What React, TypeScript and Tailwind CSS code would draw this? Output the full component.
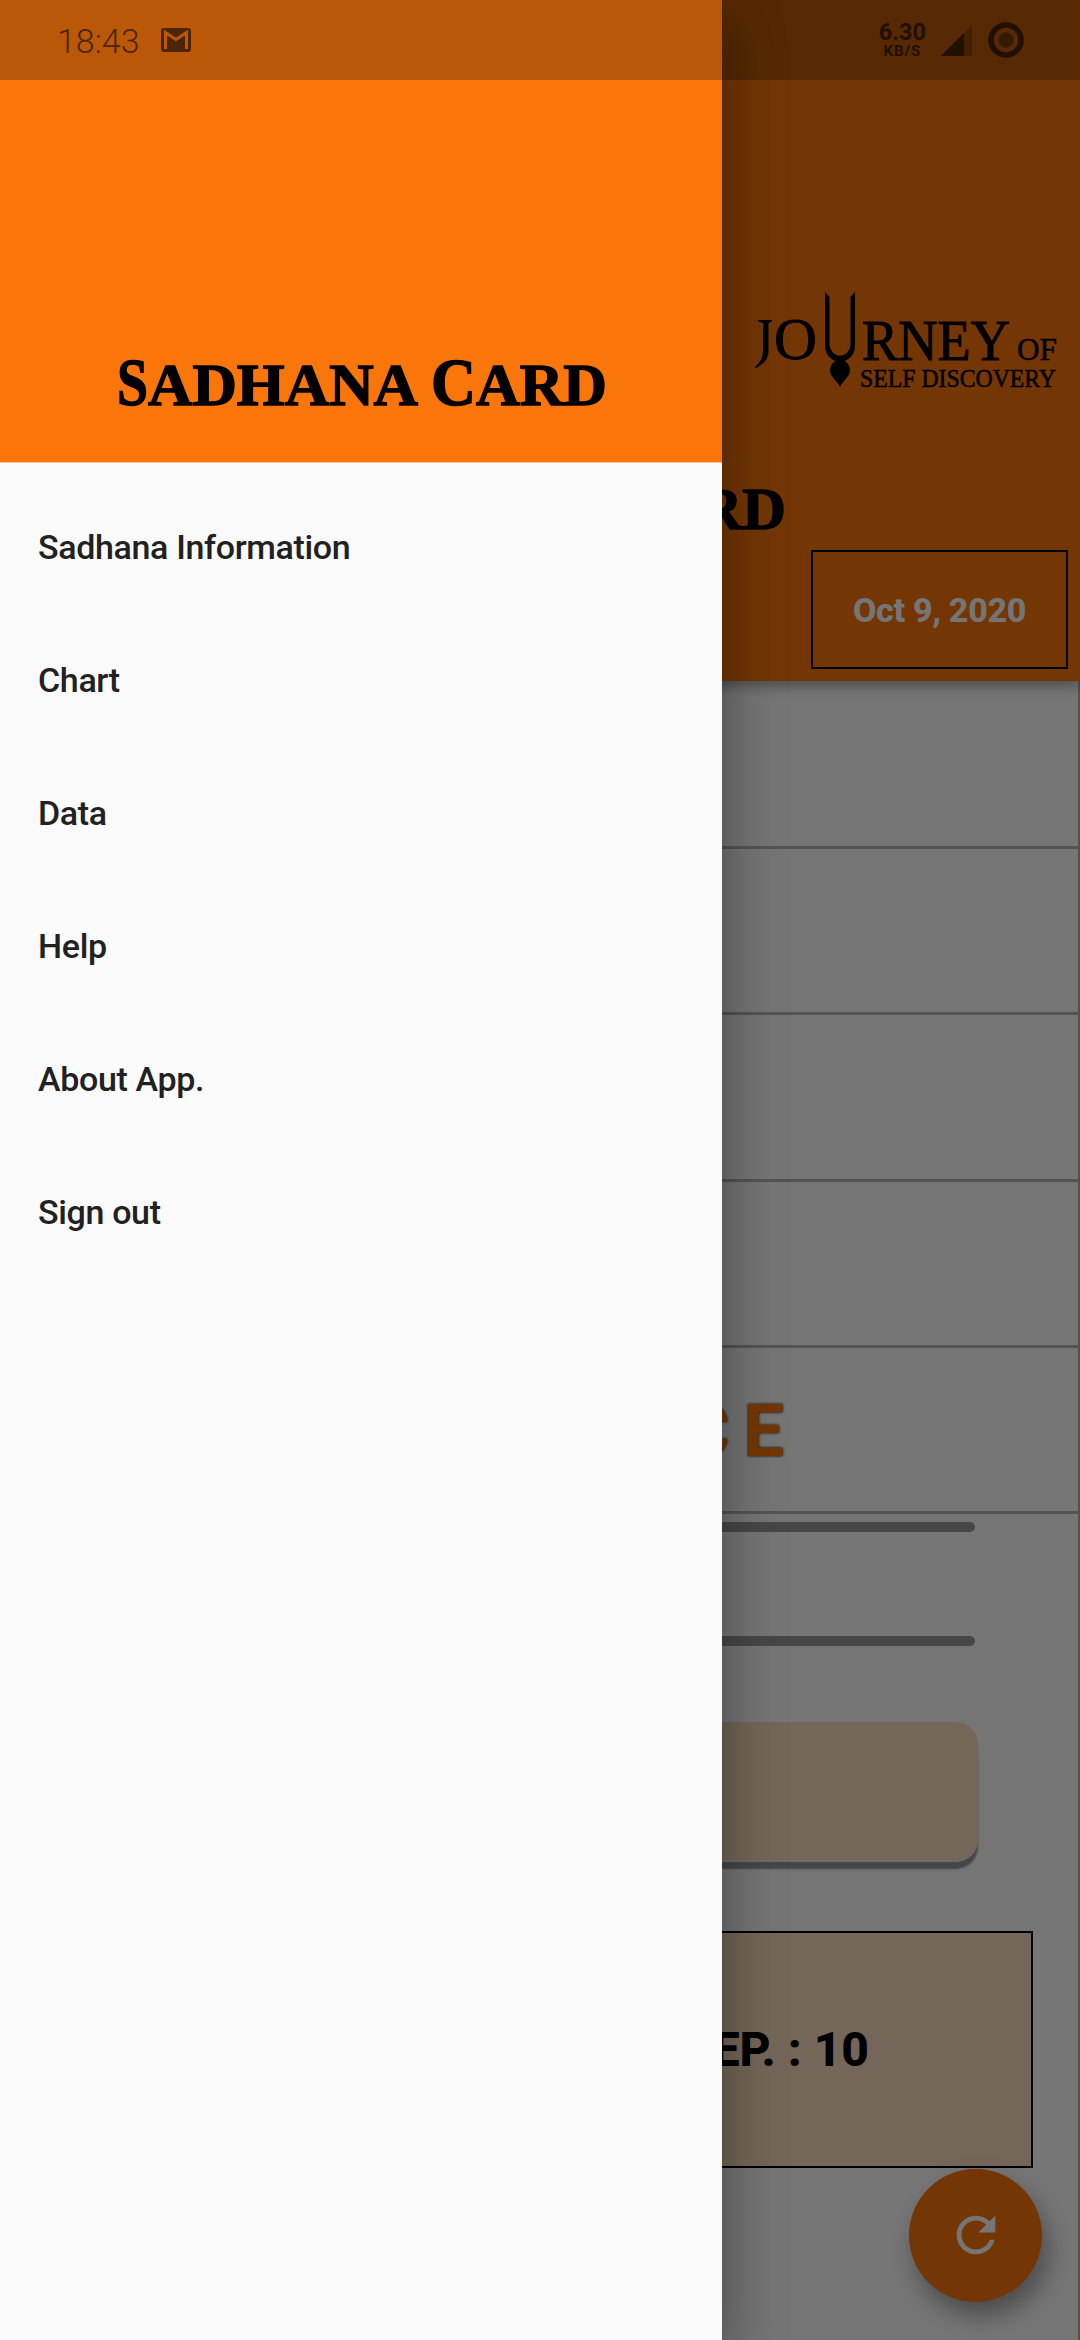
import React from "react";

const menuItems = ["Sadhana Information", "Chart", "Data", "Help", "About App.", "Sign out"];

function Title() {
  return (
    <svg width="490" height="64" viewBox="0 0 490 64" className="block shrink-0 overflow-visible" fill="#000" stroke="#000" strokeWidth="1.4" fontFamily="'Liberation Serif', serif" fontWeight="700">
      <text x="1" y="52" fontSize="67" textLength="31" lengthAdjust="spacingAndGlyphs">S</text>
      <text x="32" y="52" fontSize="60" textLength="270" lengthAdjust="spacingAndGlyphs">ADHANA</text>
      <text x="315" y="52" fontSize="67" textLength="45" lengthAdjust="spacingAndGlyphs">C</text>
      <text x="360" y="52" fontSize="60" textLength="131" lengthAdjust="spacingAndGlyphs">ARD</text>
    </svg>
  );
}

function JourneyLogo() {
  return (
    <svg width="304" height="98" viewBox="0 0 304 98" className="block overflow-visible" fill="#000" fontFamily="'Liberation Serif', serif">
      <path d="M4 30H18V31.5L14.5 33V62Q14 72 2 78L1 77Q9 70 9 61V33L4 31.5Z" />
      <text x="20" y="69" fontSize="59" textLength="43" lengthAdjust="spacingAndGlyphs" stroke="#000" strokeWidth="0.8">O</text>
      <path d="M71 2L75.5 7V54a10.500 11.500 0 0 0 21 0V7L101 2V56a15 15.500 0 0 1 -30 0Z" />
      <path d="M86 70C91 70 96 74 96 80C96 87 89 90 86 97C83 90 76 87 76 80C76 74 81 70 86 70Z" />
      <text x="108" y="69.500" fontSize="57" textLength="148" lengthAdjust="spacingAndGlyphs" stroke="#000" strokeWidth="1">RNEY</text>
      <text x="263" y="69.500" fontSize="31" textLength="40" lengthAdjust="spacingAndGlyphs" stroke="#000" strokeWidth="0.5">OF</text>
      <text x="106" y="96.500" fontSize="25.500" textLength="196" lengthAdjust="spacingAndGlyphs" stroke="#000" strokeWidth="0.5">SELF DISCOVERY</text>
    </svg>
  );
}

function HomePage() {
  return (
    <div className="flex h-[2340px] w-full flex-col bg-white">
      <header className="relative z-10 flex h-[681px] shrink-0 flex-col items-end bg-[#fa760a] pt-[290px] shadow-[0_4px_14px_rgba(0,0,0,0.4)]">
        <div className="pr-[22px]">
          <JourneyLogo />
        </div>
        <div className="mt-[89px] flex w-full justify-center">
          <Title />
        </div>
        <div className="mt-[9px] mr-3 flex h-[119px] w-[257px] items-center justify-center border-[2.5px] border-black pt-0.5 text-[34px] font-extrabold tracking-[-0.3px] text-white">
          Oct 9, 2020
        </div>
      </header>
      <main className="flex flex-1 flex-col border-r-2 border-[#b0b0b0]">
        <section className="h-[168px] shrink-0 border-b-[3px] border-[#b8b8b8]" />
        {[1, 2, 3].map((row) => (
          <section key={row} className="h-[166.300px] shrink-0 border-b-[3px] border-[#b8b8b8]" />
        ))}
        <section className="flex h-[166px] shrink-0 items-center justify-end border-b-[3px] border-[#b8b8b8] pt-[5px] pr-[280px] text-[72px] font-bold tracking-[14px] text-[#fa760a] [text-shadow:0_0_3px_#000]">
          CE
        </section>
        <div className="mt-2 mr-[103px] h-2.5 shrink-0 rounded-r-full bg-[#9b9b9b]" />
        <div className="mt-[104px] mr-[103px] h-2.5 shrink-0 rounded-r-full bg-[#9b9b9b]" />
        <div className="mt-[76px] mr-[100px] ml-[100px] h-[138px] shrink-0 rounded-[22px] bg-[#fddebf] shadow-[0_2px_1px_#eee,0_9px_2px_#999]" />
        <div className="mr-[45px] ml-[48px] mt-[71px] flex h-[237px] shrink-0 items-center justify-end border-[2.5px] border-black bg-[#fddebf] pt-0.5 pr-[162px] text-[48px] font-extrabold text-black">
          EP. : 10
        </div>
        <div className="mt-[1px] mr-9 flex size-[133px] shrink-0 items-center justify-center self-end rounded-full bg-[#fa760a] shadow-[6px_14px_24px_rgba(0,0,0,0.35)]">
          <svg viewBox="0 0 24 24" className="size-[58px] fill-white">
            <path d="M17.65 6.350C16.200 4.900 14.210 4 12 4c-4.420 0-7.990 3.580-7.990 8s3.570 8 7.990 8c3.730 0 6.840-2.550 7.730-6h-2.080c-.82 2.330-3.040 4-5.650 4-3.310 0-6-2.690-6-6s2.690-6 6-6c1.660 0 3.140.69 4.220 1.780L13 11h7V4l-2.350 2.350z" />
          </svg>
        </div>
      </main>
    </div>
  );
}

function Drawer() {
  return (
    <aside className="absolute top-0 left-0 flex h-full w-[722px] flex-col bg-[#fafafa] shadow-[0_24px_56px_rgba(0,0,0,0.4)]">
      <header className="flex h-[463px] shrink-0 justify-center border-b border-[#fbc89c] bg-[#fa760a] pt-[353px]">
        <Title />
      </header>
      <nav className="flex flex-col pt-[18px]">
        {menuItems.map((label) => (
          <a key={label} className="flex h-[133px] items-center px-[38px] text-[34px] font-medium tracking-[-0.35px] text-[#212121]">
            {label}
          </a>
        ))}
      </nav>
    </aside>
  );
}

function StatusBar() {
  return (
    <div className="absolute inset-x-0 top-0 flex h-20 items-center bg-black/25 pr-[56px] pl-[57px]">
      <span className="pt-0.5 text-[34px] leading-none font-[350] text-[#4b2505]">18:43</span>
      <svg width="30" height="24" viewBox="0 0 30 24" className="ml-[21px]">
        <rect width="30" height="24" rx="3" fill="#4b2505" />
        <path d="M4.500 21V4.500L15 11.500L25.500 4.500V21" fill="none" stroke="#bb5907" strokeWidth="3" />
      </svg>
      <div className="ml-auto flex flex-col items-center font-bold text-[#210f00]">
        <span className="text-[23.500px] leading-[22px]">6.30</span>
        <span className="text-[15px] leading-4 tracking-[1px]">KB/S</span>
      </div>
      <svg width="31" height="31" viewBox="0 0 31 31" className="ml-[15px]">
        <path d="M31 0V31H0Z" fill="#432001" />
        <path d="M23 8V31H0Z" fill="#210f00" />
      </svg>
      <svg width="36" height="36" viewBox="0 0 36 36" className="ml-[16px]">
        <circle cx="18" cy="18" r="15" fill="none" stroke="#210f00" strokeWidth="5.500" />
        <circle cx="18" cy="18" r="7.500" fill="#351900" />
      </svg>
    </div>
  );
}

export default function App() {
  return (
    <div className="relative h-[2340px] w-[1080px] overflow-hidden font-['Roboto',sans-serif]">
      <HomePage />
      <div className="absolute inset-0 z-10 bg-black/54" />
      <div className="absolute inset-0 z-20">
        <Drawer />
        <StatusBar />
      </div>
    </div>
  );
}
